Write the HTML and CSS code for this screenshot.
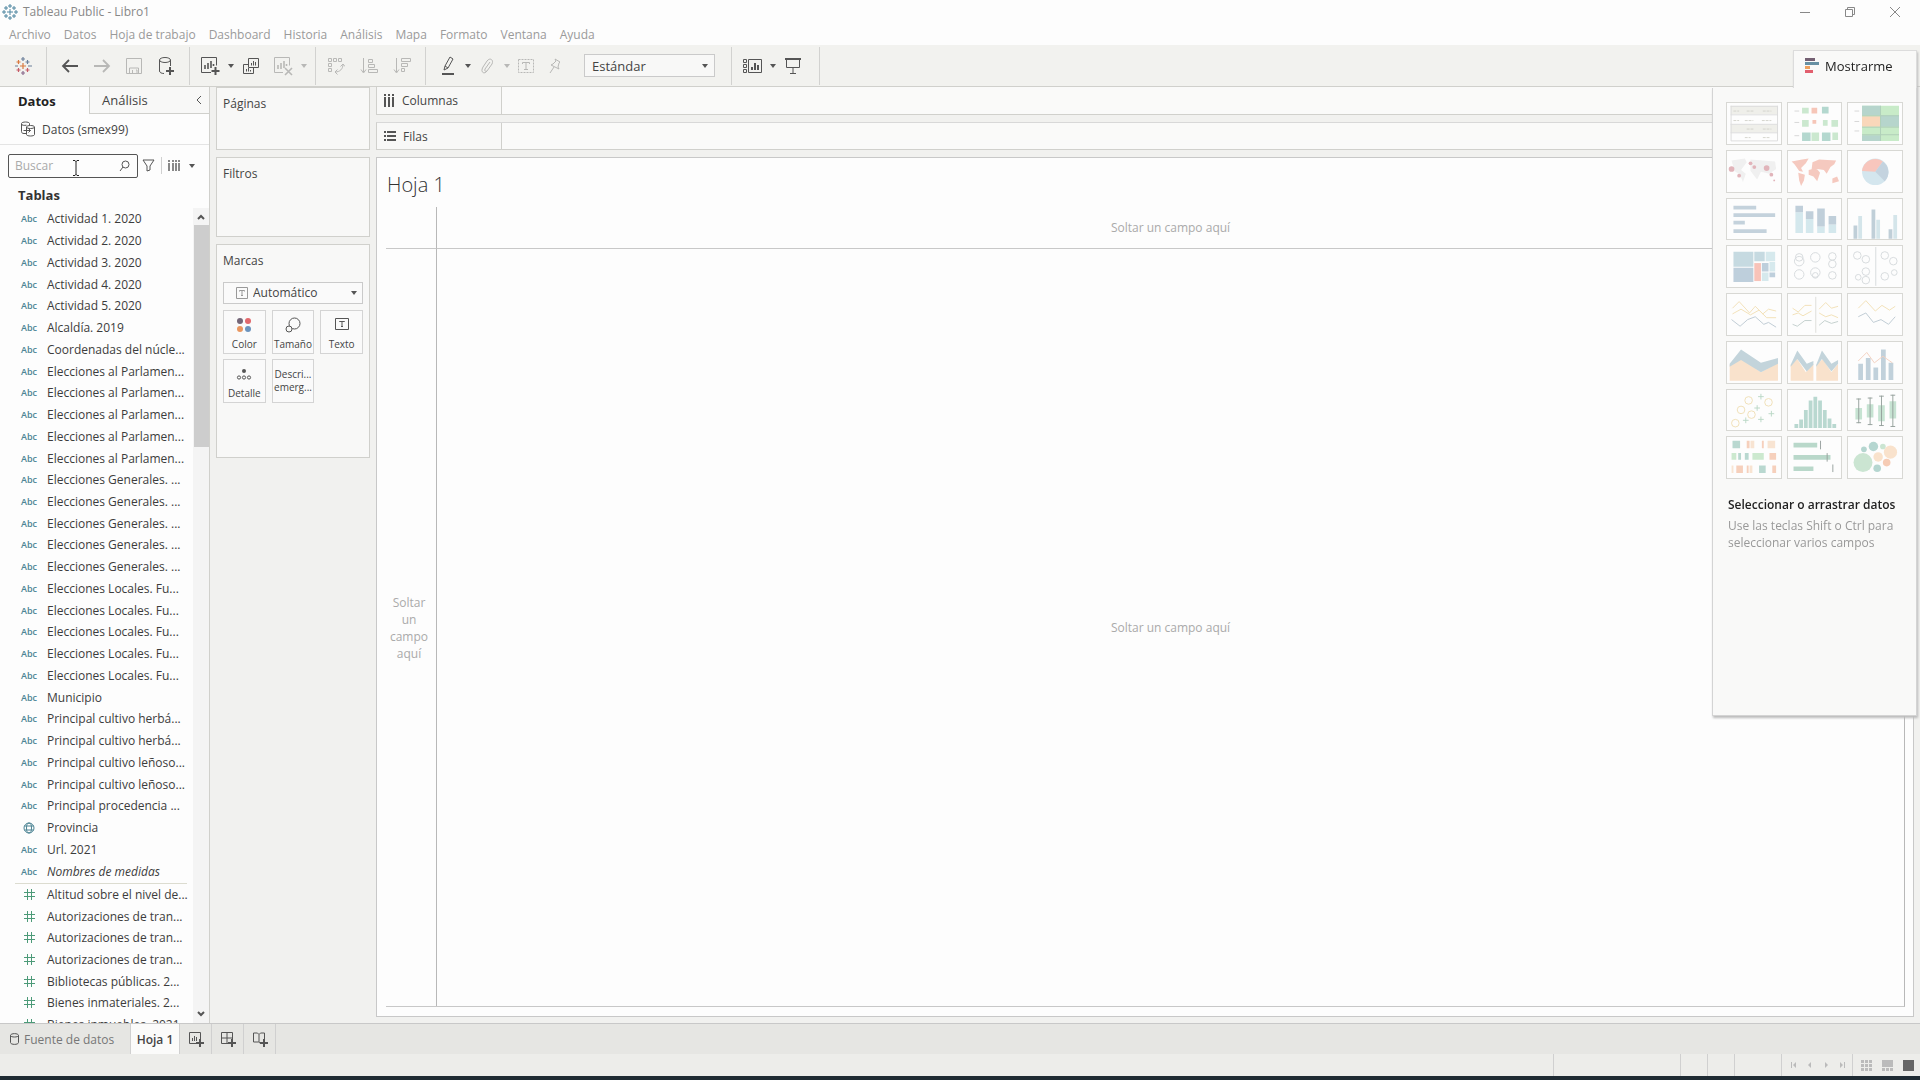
FILE: index.html
```
<!DOCTYPE html>
<html lang="es">

<head>
    <meta charset="UTF-8">
    <meta name="viewport" content="width=device-width, initial-scale=1.0">
    <title>Tableau Public - Libro1</title>
    <link rel="stylesheet" href="styles.css">
</head>

<body>
    <header class="title-bar">
        <svg class="app-icon" width="16" height="16" viewBox="0 0 16 16" fill="none" stroke="#4f86a0"><path d="M8 5v6M5 8h6M8 0v4M6 2h4M8 12v4M6 14h4M2 6v4M0 8h4M14 6v4M12 8h4M4 2v4M2 4h4M12 2v4M10 4h4M4 10v4M2 12h4M12 10v4M10 12h4"/></svg>
        <span class="app-title">Tableau Public - Libro1</span>
        <div class="window-buttons">
            <button aria-label="Minimizar"><svg width="12" height="12" viewBox="0 0 12 12"><path d="M1 6.500h10"/></svg></button>
            <button aria-label="Restaurar"><svg width="12" height="12" viewBox="0 0 12 12"><path d="M1.500 3.500h7v7h-7zM3.500 3.500v-2h7v7h-2"/></svg></button>
            <button aria-label="Cerrar"><svg width="12" height="12" viewBox="0 0 12 12"><path d="M1 1l10 10M11 1L1 11"/></svg></button>
        </div>
    </header>

    <nav class="menu-bar">
        <a href="#">Archivo</a>
        <a href="#">Datos</a>
        <a href="#">Hoja de trabajo</a>
        <a href="#">Dashboard</a>
        <a href="#">Historia</a>
        <a href="#">Análisis</a>
        <a href="#">Mapa</a>
        <a href="#">Formato</a>
        <a href="#">Ventana</a>
        <a href="#">Ayuda</a>
    </nav>

    <div class="toolbar">
        <div class="tool-group logo-group">
            <button aria-label="Inicio"><svg width="18" height="18" viewBox="0 0 18 18" fill="none" stroke-width="1.200"><path stroke="#d9793f" d="M9 6v6M6 9h6M4.500 3v4M2.500 5h4"/><path stroke="#c65b66" d="M4.500 11v4M2.500 13h4M13.500 11v4M11.500 13h4"/><path stroke="#6b7f9a" d="M9 0v4M7 2h4M13.500 3v4M11.500 5h4M1 9h3M14 9h4"/><path stroke="#8a6a8c" d="M9 14v4M7 16h4"/></svg></button>
        </div>
        <div class="tool-group">
            <button aria-label="Deshacer"><svg width="18" height="16" viewBox="0 0 18 16"><path stroke-width="1.800" d="M17 8H2M8 2L2 8l6 6"/></svg></button>
            <button aria-label="Rehacer" disabled><svg width="18" height="16" viewBox="0 0 18 16"><path stroke-width="1.800" d="M1 8h15M10 2l6 6-6 6"/></svg></button>
            <button aria-label="Guardar" disabled><svg width="18" height="18" viewBox="0 0 18 18"><path d="M1.500 1.500h15v15h-15zM4.500 16v-5h9v5M7.500 13v3M11 13h1v3"/></svg></button>
            <button aria-label="Nueva fuente de datos"><svg width="18" height="20" viewBox="0 0 18 20"><ellipse cx="8" cy="4" rx="5.500" ry="2.500"/><path d="M2.500 4v11c0 1.500 2 2.500 4.500 2.500M13.500 4v6"/><path stroke-width="2" d="M13 11v8M9 15h8"/></svg></button>
        </div>
        <div class="tool-group sheet-group">
            <button aria-label="Nueva hoja de trabajo"><svg width="20" height="20" viewBox="0 0 20 20"><path d="M11 16.500H1.500v-15h15v8"/><path stroke-width="1.600" d="M5 13V9M8 13V7M11 12V5M13.500 10V8"/><path stroke-width="2" d="M15.500 11v8M11.500 15h8"/></svg></button>
            <button class="caret" aria-label="Más hojas"></button>
            <button aria-label="Duplicar"><svg width="18" height="18" viewBox="0 0 18 18"><path d="M6.500 1.500h10v9h-10zM6 7.500H1.500v9h10V11M9.500 8.500V6M11.500 8.500V4M13.500 8.500V5M4.500 14.500V12M6.500 14.500V11M8.500 14.500V13"/></svg></button>
            <button aria-label="Borrar hoja" disabled><svg width="20" height="20" viewBox="0 0 20 20"><path d="M10 16.500H1.500v-15h15v8"/><path stroke-width="1.600" d="M5 13V9M8 13V7M11 12V5M13.500 10V8M12 12l7 7M19 12l-7 7"/></svg></button>
            <button class="caret" aria-label="Más opciones de borrado" disabled></button>
        </div>
        <div class="tool-group sort-group">
            <button aria-label="Intercambiar" disabled><svg width="18" height="18" viewBox="0 0 18 18"><path d="M1.500 1.500h3v3h-3zM6.500 1.500h3v3h-3zM11.500 1.500h3v3h-3zM1.500 6.500h3v3h-3zM1.500 11.500h3v3h-3zM16 7c0 5-3 8-8 8M13.500 9.500L16 7l2 2.500M10.500 12.500L8 15l2.500 2.500"/></svg></button>
            <button aria-label="Orden ascendente" disabled><svg width="18" height="18" viewBox="0 0 18 18"><path d="M3.500 1v14M1 12.500L3.500 16 6 12.500M8.500 2.500h4v3h-4zM8.500 7.500h6v3h-6zM8.500 12.500h9v3h-9z"/></svg></button>
            <button aria-label="Orden descendente" disabled><svg width="18" height="18" viewBox="0 0 18 18"><path d="M3.500 1v14M1 12.500L3.500 16 6 12.500M8.500 1.500h9v3h-9zM8.500 6.500h6v3h-6zM8.500 11.500h3v3h-3z"/></svg></button>
        </div>
        <div class="tool-group format-group">
            <button aria-label="Resaltar"><svg width="16" height="20" viewBox="0 0 16 20"><path d="M4 14l1-4 5-9 3 2-5 9zM5 10l3 2"/><path stroke-width="2" d="M2 18h12"/></svg></button>
            <button class="caret" aria-label="Opciones de resaltado"></button>
            <button aria-label="Agrupar" disabled><svg width="16" height="18" viewBox="0 0 16 18"><path d="M11 5l-5 7c-1 2 1 3 2 2l5-7c2-4-2-7-5-3L4 10c-3 5 1 8 4 4"/></svg></button>
            <button class="caret" aria-label="Opciones de grupo" disabled></button>
            <button aria-label="Etiquetas" disabled><svg width="18" height="18" viewBox="0 0 18 18"><path stroke-dasharray="2 1" d="M1.500 2.500h15v13h-15z"/><path d="M5.500 7V5.500h7V7M9 5.500v7M7 12.500h4"/></svg></button>
            <button aria-label="Fijar" disabled><svg width="14" height="18" viewBox="0 0 14 18"><path d="M7 2l5 3-1 1-1 4 1 2-8-4 2-1 3-3zM6 10l-4 6"/></svg></button>
        </div>
        <label class="fit-select">
            <select aria-label="Ajuste"><option>Estándar</option></select>
        </label>
        <div class="tool-group view-group">
            <button aria-label="Mostrar tarjetas"><svg width="20" height="18" viewBox="0 0 20 18"><path d="M1.500 2.500h3v3h-3zM1.500 7.500h3v3h-3zM1.500 12.500h3v3h-3zM6.500 2.500h13v13h-13z"/><path stroke-width="2" d="M10 13v-3M13 13V6M16 13V8"/></svg></button>
            <button class="caret" aria-label="Opciones de tarjetas"></button>
            <button aria-label="Modo presentación"><svg width="18" height="18" viewBox="0 0 18 18"><path d="M2.500 2v8.500h13V2M9 11v5M6 16.500h6"/><path stroke-width="2" d="M1 2h16"/></svg></button>
        </div>
    </div>

    <main class="workspace">
        <aside class="data-pane">
            <div class="pane-tabs">
                <button class="pane-tab active">Datos</button>
                <button class="pane-tab">Análisis<svg width="6" height="10" viewBox="0 0 6 10"><path d="M5 1L1 5l4 4"/></svg></button>
            </div>
            <div class="data-source">
                <svg width="16" height="16" viewBox="0 0 16 16"><path d="M6 12.500H4c-2 0-2.500-1-2.500-2v-8c0-2 8-2 8 0V4M1.500 3c0 1.500 3 1.500 5 1.200M6.500 6v7.500c0 2 8 2 8 0V6c0-2-8-2-8 0 0 2 8 2 8 0M3.500 9.500h7M8.500 7.500l2 2-2 2"/></svg>
                <span>Datos (smex99)</span>
            </div>
            <div class="search-row">
                <div class="search-box">
                    <input type="text" placeholder="Buscar" aria-label="Buscar">
                    <svg width="11" height="12" viewBox="0 0 11 12"><circle cx="6.500" cy="4.500" r="3.500"/><path d="M4 7L1 11"/></svg>
                    <svg class="text-cursor" width="8" height="18" viewBox="0 0 8 18"><path d="M1 1.500h2l1 1 1-1h2M4 2v14M1 16.500h2l1-1 1 1h2"/></svg>
                </div>
                <button class="filter-button" aria-label="Filtrar"><svg width="13" height="13" viewBox="0 0 13 13"><path d="M1 1h11L8 7v4l-3 1V7z"/></svg></button>
                <button class="view-button" aria-label="Ver datos"><svg width="12" height="11" viewBox="0 0 12 11"><path stroke-width="2" d="M1 0v2M1 3v8M5 0v2M5 3v8M8 0v2M8 3v8M11 0v2M11 3v8"/></svg></button>
                <button class="caret" aria-label="Opciones"></button>
            </div>
            <h2 class="tables-title">Tablas</h2>
            <div class="fields">
                <div class="field-lists">
                    <ul class="field-list dimensions">
                        <li><i>Abc</i>Actividad 1. 2020</li>
                        <li><i>Abc</i>Actividad 2. 2020</li>
                        <li><i>Abc</i>Actividad 3. 2020</li>
                        <li><i>Abc</i>Actividad 4. 2020</li>
                        <li><i>Abc</i>Actividad 5. 2020</li>
                        <li><i>Abc</i>Alcaldía. 2019</li>
                        <li><i>Abc</i>Coordenadas del núcle...</li>
                        <li><i>Abc</i>Elecciones al Parlamen...</li>
                        <li><i>Abc</i>Elecciones al Parlamen...</li>
                        <li><i>Abc</i>Elecciones al Parlamen...</li>
                        <li><i>Abc</i>Elecciones al Parlamen...</li>
                        <li><i>Abc</i>Elecciones al Parlamen...</li>
                        <li><i>Abc</i>Elecciones Generales. ...</li>
                        <li><i>Abc</i>Elecciones Generales. ...</li>
                        <li><i>Abc</i>Elecciones Generales. ...</li>
                        <li><i>Abc</i>Elecciones Generales. ...</li>
                        <li><i>Abc</i>Elecciones Generales. ...</li>
                        <li><i>Abc</i>Elecciones Locales. Fu...</li>
                        <li><i>Abc</i>Elecciones Locales. Fu...</li>
                        <li><i>Abc</i>Elecciones Locales. Fu...</li>
                        <li><i>Abc</i>Elecciones Locales. Fu...</li>
                        <li><i>Abc</i>Elecciones Locales. Fu...</li>
                        <li><i>Abc</i>Municipio</li>
                        <li><i>Abc</i>Principal cultivo herbá...</li>
                        <li><i>Abc</i>Principal cultivo herbá...</li>
                        <li><i>Abc</i>Principal cultivo leñoso...</li>
                        <li><i>Abc</i>Principal cultivo leñoso...</li>
                        <li><i>Abc</i>Principal procedencia ...</li>
                        <li><i><svg width="12" height="12" viewBox="0 0 12 12"><circle cx="6" cy="6" r="5"/><ellipse cx="6" cy="6" rx="2.500" ry="5"/><path d="M1.500 4h9M1.500 8h9"/></svg></i>Provincia</li>
                        <li><i>Abc</i>Url. 2021</li>
                        <li class="generated"><i>Abc</i>Nombres de medidas</li>
                    </ul>
                    <ul class="field-list measures">
                        <li><i><svg width="11" height="11" viewBox="0 0 11 11"><path d="M3.500 0v11M7.500 0v11M0 3.500h11M0 7.500h11"/></svg></i>Altitud sobre el nivel de...</li>
                        <li><i><svg width="11" height="11" viewBox="0 0 11 11"><path d="M3.500 0v11M7.500 0v11M0 3.500h11M0 7.500h11"/></svg></i>Autorizaciones de tran...</li>
                        <li><i><svg width="11" height="11" viewBox="0 0 11 11"><path d="M3.500 0v11M7.500 0v11M0 3.500h11M0 7.500h11"/></svg></i>Autorizaciones de tran...</li>
                        <li><i><svg width="11" height="11" viewBox="0 0 11 11"><path d="M3.500 0v11M7.500 0v11M0 3.500h11M0 7.500h11"/></svg></i>Autorizaciones de tran...</li>
                        <li><i><svg width="11" height="11" viewBox="0 0 11 11"><path d="M3.500 0v11M7.500 0v11M0 3.500h11M0 7.500h11"/></svg></i>Bibliotecas públicas. 2...</li>
                        <li><i><svg width="11" height="11" viewBox="0 0 11 11"><path d="M3.500 0v11M7.500 0v11M0 3.500h11M0 7.500h11"/></svg></i>Bienes inmateriales. 2...</li>
                        <li><i><svg width="11" height="11" viewBox="0 0 11 11"><path d="M3.500 0v11M7.500 0v11M0 3.500h11M0 7.500h11"/></svg></i>Bienes inmuebles. 2021</li>
                    </ul>
                </div>
                <div class="scrollbar">
                    <svg width="8" height="6" viewBox="0 0 8 6"><path stroke-width="2" d="M1 5l3-3 3 3"/></svg>
                    <div class="scroll-thumb"></div>
                    <svg width="8" height="6" viewBox="0 0 8 6"><path stroke-width="2" d="M1 1l3 3 3-3"/></svg>
                </div>
            </div>
        </aside>

        <section class="cards">
            <div class="card pages">Páginas</div>
            <div class="card filters">Filtros</div>
            <div class="card marks">
                <span>Marcas</span>
                <label class="mark-type">
                    <svg width="12" height="12" viewBox="0 0 12 12"><path d="M.5.5h11v11H.5zM3.500 4.500v-1h5v1M6 3.500v5M5 8.500h2"/></svg>
                    <select aria-label="Tipo de marca"><option>Automático</option></select>
                </label>
                <div class="mark-buttons">
                    <button><svg width="16" height="16" viewBox="0 0 16 16" stroke="none"><circle cx="4" cy="4" r="3" fill="#746678"/><circle cx="12" cy="4" r="3" fill="#e2686c"/><circle cx="4" cy="12" r="3" fill="#e9965f"/><circle cx="12" cy="12" r="3" fill="#6b93bd"/></svg>Color</button>
                    <button><svg width="16" height="16" viewBox="0 0 16 16"><circle cx="9.500" cy="6.500" r="5.500"/><circle cx="4" cy="12" r="3" fill="#f8f8f7"/></svg>Tamaño</button>
                    <button><svg width="14" height="14" viewBox="0 0 14 14"><path d="M.5 1.500h13v11H.5zM4.500 5V4.500h5V5M7 4.500v5M6 9.500h2"/></svg>Texto</button>
                    <button><svg width="16" height="16" viewBox="0 0 16 16"><circle cx="8" cy="5" r="2" fill="#555" stroke="none"/><circle cx="3" cy="11.500" r="1.600"/><circle cx="8" cy="11.500" r="1.600"/><circle cx="13" cy="11.500" r="1.600"/></svg>Detalle</button>
                    <button class="tooltip-button">Descri...<br>emerg...</button>
                </div>
            </div>
        </section>

        <section class="view">
            <div class="shelf">
                <div class="shelf-name"><svg width="11" height="13" viewBox="0 0 11 13"><path stroke-width="2" d="M1 0v2M1 3v10M5 0v2M5 3v10M9 0v2M9 3v10"/></svg>Columnas</div>
            </div>
            <div class="shelf">
                <div class="shelf-name"><svg width="12" height="11" viewBox="0 0 12 11"><path stroke-width="2" d="M0 1h2M3 1h9M0 5h2M3 5h9M0 9h2M3 9h9"/></svg>Filas</div>
            </div>
            <div class="sheet">
                <h1>Hoja 1</h1>
                <div class="canvas">
                    <div class="corner"></div>
                    <div class="drop-zone drop-columns">Soltar un campo aquí</div>
                    <div class="drop-zone drop-rows">Soltar un campo aquí</div>
                    <div class="drop-zone drop-body">Soltar un campo aquí</div>
                </div>
            </div>
        </section>
    </main>

    <footer>
        <div class="sheet-tabs">
            <button class="sheet-tab source"><svg width="9" height="12" viewBox="0 0 9 12"><path d="M.5 2.500v7c0 2.500 8 2.500 8 0v-7c0-2.500-8-2.500-8 0 0 2 8 2 8 0"/></svg>Fuente de datos</button>
            <button class="sheet-tab active">Hoja 1</button>
            <button class="sheet-tab add" aria-label="Nueva hoja"><svg width="16" height="16" viewBox="0 0 16 16"><path d="M9 12.500H1.500v-11h11V8M4.500 10V7M6.500 10V5M8.500 10V6"/><path stroke-width="2" d="M12 8v8M8 12h8"/></svg></button>
            <button class="sheet-tab add" aria-label="Nuevo dashboard"><svg width="16" height="16" viewBox="0 0 16 16"><path d="M9 12.500H1.500v-11h11V8M1.500 7h11M7 1.500v11"/><path stroke-width="2" d="M12 8v8M8 12h8"/></svg></button>
            <button class="sheet-tab add" aria-label="Nueva historia"><svg width="16" height="16" viewBox="0 0 16 16"><path d="M8 12L6.500 11H1.500v-9h4L7 3.500 8.500 2h4v6M7 3.500V11"/><path stroke-width="2" d="M12 8v8M8 12h8"/></svg></button>
        </div>
        <div class="status-bar">
            <span class="status-cell wide"></span>
            <span class="status-cell"></span>
            <span class="status-cell"></span>
            <span class="status-cell last"></span>
            <div class="pager">
                <button aria-label="Primera"><svg width="8" height="8" viewBox="0 0 8 8"><path d="M1 1h1v6H1zM6 1v6L3 4z"/></svg></button>
                <button aria-label="Anterior"><svg width="8" height="8" viewBox="0 0 8 8"><path d="M5 1v6L2 4z"/></svg></button>
                <button aria-label="Siguiente"><svg width="8" height="8" viewBox="0 0 8 8"><path d="M3 1v6l3-3z"/></svg></button>
                <button aria-label="Última"><svg width="8" height="8" viewBox="0 0 8 8"><path d="M6 1h1v6H6zM2 1v6l3-3z"/></svg></button>
            </div>
            <div class="view-modes">
                <button aria-label="Clasificador"><svg width="11" height="11" viewBox="0 0 11 11"><path d="M0 0h3v3H0zM4 0h3v3H4zM8 0h3v3H8zM0 4h3v3H0zM4 4h3v3H4zM8 4h3v3H8zM0 8h3v3H0zM4 8h3v3H4zM8 8h3v3H8z"/></svg></button>
                <button aria-label="Tira de miniaturas"><svg width="11" height="11" viewBox="0 0 11 11"><path d="M0 0h11v7H0zM0 8h3v3H0zM4 8h3v3H4zM8 8h3v3H8z"/></svg></button>
                <button class="active" aria-label="Pestañas"><svg width="11" height="11" viewBox="0 0 11 11"><path d="M0 0h11v11H0z"/></svg></button>
            </div>
        </div>
        <div class="taskbar-edge"></div>
    </footer>

    <div class="show-me">
        <button class="show-me-tab"><svg width="15" height="16" viewBox="0 0 15 16" stroke="none"><path fill="#746073" d="M1 0h10v3H1z"/><path fill="#6790a3" d="M1 4h14v3H1z"/><path fill="#eda05d" d="M1 8h5v3H1z"/><path fill="#e25f6e" d="M1 12h8v3H1z"/></svg>Mostrarme</button>
        <div class="show-me-body">
            <div class="chart-grid">
                <button disabled aria-label="Tabla de texto"><svg viewBox="0 0 55 43"><path fill="#ecece6" d="M3 3h50v9H3zM3 23h50v8H3z"/><path stroke="#d4d4d4" d="M3.500 3v37h49V3M3 3.500h50M3 12.500h50M3 22.500h50M3 31.500h50"/><path stroke="#c9c9c0" stroke-dasharray="3 1" d="M6 8.500h6M20 8.500h8M37 8.500h9M6 18.500h6M18 18.500h9M36 18.500h10M20 27.500h8M37 27.500h9M18 36.500h6M37 36.500h8"/></svg></button>
                <button disabled aria-label="Mapa de calor"><svg viewBox="0 0 55 43"><path fill="#bfe3c4" d="M14 5h7v6h-7zM14 18h7v7h-7zM36 18h5v6h-5zM45 18h7v7h-7zM24 31h8v9h-8zM46 31h6v8h-6z"/><path fill="#f5b9a8" d="M24 5h6v6h-6zM25 18h4v4h-4z"/><path fill="#a3cfc4" d="M35 4h7v7h-7zM14 31h9v9h-9zM35 31h9v9h-9z"/><path stroke="#ccc" d="M6 8.500h5M6 20.500h5M6 34.500h5"/></svg></button>
                <button disabled aria-label="Tabla resaltada"><svg viewBox="0 0 55 43"><path fill="#bce7bb" d="M14 3h39v37H14z"/><path fill="#a5ccc0" d="M14 3h20v10H14zM34 13h19v12H34zM14 34h20v6H14z"/><path fill="#f9ceaa" d="M14 14h19v11H14z"/><path stroke="#9dc4a8" d="M14 13.500h39M14 25.500h39M14 33.500h39M33.500 3v37"/><path stroke="#ccc" d="M6 8.500h5M6 19.500h5M6 29.500h5"/></svg></button>
                <button disabled aria-label="Mapa de símbolos"><svg viewBox="0 0 55 43"><path fill="#ededed" d="M4 10l14-2 2 4-6 8 5 4-3 9-3-8-6-4zM24 9l26 2 1 8-7 5-9-2-4 8-7-9z"/><g fill="#dba3aa"><circle cx="4" cy="19" r="3"/><circle cx="41" cy="18" r="3"/><circle cx="28" cy="17" r="2"/><circle cx="46" cy="25" r="2"/><circle cx="12" cy="26" r="2"/><circle cx="24" cy="13" r="2"/><circle cx="49" cy="31" r="1"/></g></svg></button>
                <button disabled aria-label="Mapa"><svg viewBox="0 0 55 43"><path fill="#f4bdb0" d="M3 11l11-2 7-1-3 5-5 5 2 4-4-1-5-7zM10 23l7 2-1 6-3 6-2-6zM21 20l8-2 4 5-3 9-4-5-5-2zM25 12l7-3 18 1-2 4-4 3-4 7-3-4-7-1-6 1zM46 29l5-2 2 5-7 2z"/></svg></button>
                <button disabled aria-label="Gráfico circular"><svg viewBox="0 0 55 43"><circle cx="28" cy="22" r="14" fill="#cae1eb"/><path fill="#f7b9ae" d="M28 22L14 21a14 14 0 0 1 22-10z"/><path fill="#b6c9d8" d="M28 22l8-11a14 14 0 0 1 2 21z"/></svg></button>
                <button disabled aria-label="Barras horizontales"><svg viewBox="0 0 55 43"><path fill="#b7c8d4" d="M6 7h24v4H6zM6 15h44v4H6zM6 23h12v4H6zM6 32h35v4H6z"/></svg></button>
                <button disabled aria-label="Barras apiladas"><svg viewBox="0 0 55 43"><path fill="#cbe3ea" d="M7 14h8v22H7zM18 21h8v15h-8zM30 29h8v7h-8zM42 27h8v9h-8z"/><path fill="#b2c4d2" d="M7 7h8v7H7zM18 13h8v8h-8zM30 10h8v19h-8zM42 18h8v9h-8z"/></svg></button>
                <button disabled aria-label="Barras paralelas"><svg viewBox="0 0 55 43"><path fill="#b2c4d0" d="M5 28h4v14H5zM24 11h4v31h-4zM42 32h4v10h-4z"/><path fill="#cbe0e6" d="M10 18h4v24h-4zM29 22h4v20h-4zM47 17h4v25h-4z"/></svg></button>
                <button disabled aria-label="Diagrama de árbol"><svg viewBox="0 0 55 43"><path fill="#b9d2db" d="M6 6h21v16H6zM28 6h11v10H28z"/><path fill="#afc4d5" d="M6 23h21v15H6zM36 18h7v9h-7zM44 28h6v5h-6z"/><path fill="#cde5ea" d="M40 6h10v10H40zM44 17h6v10h-6zM36 28h7v9h-7z"/><path fill="#f7b5a9" d="M28 18h7v19h-7z"/></svg></button>
                <button disabled aria-label="Círculos"><svg viewBox="0 0 55 43" stroke="#ccd1d5"><circle cx="11" cy="16" r="5"/><circle cx="11" cy="12" r="4"/><circle cx="28" cy="12" r="5"/><circle cx="46" cy="11" r="4"/><circle cx="11" cy="30" r="5"/><circle cx="28" cy="28" r="5"/><circle cx="28" cy="31" r="3"/><circle cx="46" cy="19" r="4"/><circle cx="46" cy="31" r="4"/></svg></button>
                <button disabled aria-label="Círculos en paralelo"><svg viewBox="0 0 55 43" stroke="#ccd1d5"><path d="M28.500 1v41"/><circle cx="9" cy="10" r="4"/><circle cx="18" cy="14" r="4"/><circle cx="18" cy="27" r="4"/><circle cx="18" cy="36" r="4"/><circle cx="38" cy="10" r="4"/><circle cx="47" cy="16" r="4"/><circle cx="38" cy="32" r="4"/><circle cx="10" cy="33" r="3"/><circle cx="48" cy="28" r="3"/></svg></button>
                <button disabled aria-label="Líneas continuas"><svg viewBox="0 0 55 43"><path stroke="#efd9a4" d="M5 15l7-7 11 12 6-7 8 8 6-5 8 2M5 21l9-5 10 6 9-5 8 8h10"/><path stroke="#aebdc8" d="M4 27l9 7 8-7 8-3 9 8 5-2 8 5"/></svg></button>
                <button disabled aria-label="Líneas discretas"><svg viewBox="0 0 55 43"><path stroke="#d7d7d0" d="M28.500 3v38"/><path stroke="#efd9a4" d="M4 15l6 4 7-7h7M4 22l6-2 5 3 9-5M32 16l7-7 6 6 7-2M32 20l7 4 6-2 7 3"/><path stroke="#b4c4c1" d="M4 32l5 2 8-6h7M32 33l6-5 7 3 7-2"/></svg></button>
                <button disabled aria-label="Líneas dobles"><svg viewBox="0 0 55 43"><path stroke="#efd9a4" d="M10 15l8-8 10 11 7-6 8 5 6-4"/><path stroke="#aebdc8" d="M10 24l8-4 8 10 8-3 8 5 7-8"/></svg></button>
                <button disabled aria-label="Área continua"><svg viewBox="0 0 55 43"><path fill="#f9dcc0" d="M2 24l12-7 21 15 18-10v19H2z"/><path fill="#b5cbd3" d="M2 23L14 8l21 14 18-5v6L35 32 14 19 2 26z"/></svg></button>
                <button disabled aria-label="Área discreta"><svg viewBox="0 0 55 43"><path fill="#f9dcc0" d="M2 24l7-6 9 14 8-9v18H2zM29 24l7-6 9 14 7-9v18H29z"/><path fill="#b5cbd3" d="M2 24L9 9l10 14 7-3v4l-7 7L9 18l-7 8zM29 24l6-15 10 14 7-4v4l-7 8-10-13-6 8z"/></svg></button>
                <button disabled aria-label="Combinación doble"><svg viewBox="0 0 55 43"><path fill="#b3c7d3" d="M10 23h5v17h-5zM18 17h5v23h-5zM26 27h5v13h-5zM34 8h5v32h-5zM42 22h5v18h-5z"/><path stroke="#f1c5b0" d="M10 20l9-9 8 11 9-7 10 7"/></svg></button>
                <button disabled aria-label="Dispersión"><svg viewBox="0 0 55 43"><g stroke="#ecd8a4"><circle cx="22" cy="11" r="4"/><circle cx="43" cy="13" r="4"/><circle cx="14" cy="21" r="4"/><circle cx="25" cy="26" r="4"/><circle cx="8" cy="35" r="4"/></g><path stroke="#a9ceb8" d="M35 4v6M32 7h6M31 16v6M28 19h6M46 22v6M43 25h6M35 28v6M32 31h6M19 29v6M16 32h6"/></svg></button>
                <button disabled aria-label="Histograma"><svg viewBox="0 0 55 43"><path fill="#a9d0c6" d="M6 36h4v4H6zM11 31h4v9h-4zM16 21h4v19h-4zM21 11h4v29h-4zM26 7h4v33h-4zM31 11h4v29h-4zM36 21h4v19h-4zM41 30h4v10h-4zM46 36h4v4h-4z"/></svg></button>
                <button disabled aria-label="Diagrama de caja"><svg viewBox="0 0 55 43"><path fill="#b9ddc8" d="M7 19h7v12H7zM19 15h7v14h-7zM31 16h7v17h-7zM43 12h7v18h-7z"/><path stroke="#7c8a84" d="M10.500 9v26M22.500 8v29M34.500 6v32M46.500 5v34M8 9.500h5M8 34.500h5M20 8.500h5M20 36.500h5M32 6.500h5M32 37.500h5M44 5.500h5M44 38.500h5"/></svg></button>
                <button disabled aria-label="Gantt"><svg viewBox="0 0 55 43"><path fill="#a9d0c6" d="M5 4h8v8H5zM11 17h3v7h-3zM18 17h4v7h-4zM33 30h7v8h-7z"/><path fill="#c1e5c4" d="M4 17h5v7H4zM26 17h12v7H26z"/><path fill="#f5c5ad" d="M20 4h3v8h-3zM44 17h7v7h-7zM9 30h7v8H9zM36 4h2v8h-2zM20 30h2v8h-2zM47 30h4v8h-4z"/><path fill="#f8dfc8" d="M24 4h4v8h-4zM42 4h8v8h-8zM4 30h2v8H4zM23 30h3v8h-3z"/></svg></button>
                <button disabled aria-label="Gráfico de bala"><svg viewBox="0 0 55 43"><path fill="#a9d0be" d="M5 6h25v5H5zM5 19h39v5H5zM5 31h21v5H5z"/><path stroke="#7f8b86" d="M33.500 4v9M40.500 17v9M46.500 29v8"/></svg></button>
                <button disabled aria-label="Burbujas"><svg viewBox="0 0 55 43"><g fill="#bfe0c8"><circle cx="15" cy="27" r="10"/><circle cx="36" cy="10" r="3"/></g><g fill="#a4cdc6"><circle cx="26" cy="10" r="5"/><circle cx="16" cy="13" r="3"/><circle cx="30" cy="33" r="4"/></g><g fill="#f9dcc0"><circle cx="44" cy="16" r="7"/><circle cx="31" cy="21" r="5"/></g><circle cx="40" cy="27" r="4" fill="#f5c0a4"/></svg></button>
            </div>
            <h3>Seleccionar o arrastrar datos</h3>
            <p>Use las teclas Shift o Ctrl para seleccionar varios campos</p>
        </div>
    </div>
</body>

</html>
```

FILE: styles.css
```
* {
    box-sizing: border-box;
}

body {
    margin: 0;
    height: 100vh;
    display: flex;
    flex-direction: column;
    overflow: hidden;
    position: relative;
    font-family: "Open Sans", "Noto Sans", sans-serif;
    font-size: 12px;
    color: #444;
    background-color: #fdfdfd;
}

button, input, select {
    font: inherit;
    color: inherit;
    background: none;
    border: none;
    margin: 0;
    padding: 0;
}

svg {
    display: block;
    flex: none;
    fill: none;
    stroke: #555;
}

svg[stroke="none"] {
    stroke: none;
}

h1, h2, h3, p, ul {
    margin: 0;
    padding: 0;
}

/* Title and menu */
.title-bar {
    height: 23px;
    display: flex;
    align-items: center;
    padding-left: 2px;
    color: #888;
}

.title-bar .app-icon {
    stroke: #4f86a0;
}

.app-title {
    margin-left: 5px;
}

.window-buttons {
    margin-left: auto;
    margin-right: 3px;
    display: flex;
}

.window-buttons button {
    width: 45px;
    height: 22px;
    display: flex;
    align-items: center;
    justify-content: center;
}

.window-buttons svg {
    stroke: #888;
}

.menu-bar {
    height: 22px;
    display: flex;
    align-items: center;
    gap: 13px;
    padding-left: 9px;
}

.menu-bar a {
    color: #9a9a9a;
    text-decoration: none;
}

/* Toolbar */
.toolbar {
    height: 42px;
    display: flex;
    align-items: center;
    background-color: #f2f2ef;
    border-bottom: 1px solid #d0d0cc;
}

.tool-group {
    height: 38px;
    display: flex;
    align-items: center;
    padding: 0 7px;
    border-right: 1px solid #d2d2d0;
}

.tool-group button {
    width: 32px;
    height: 32px;
    display: flex;
    align-items: center;
    justify-content: center;
}

.tool-group button:disabled svg {
    stroke: #b8b8b6;
}

.tool-group .caret {
    width: 9px;
}

.caret::before,
.fit-select::after,
.mark-type::after {
    content: '';
    border: 3px solid transparent;
    border-top: 4px solid #555;
    border-bottom: none;
}

.caret:disabled::before {
    border-top-color: #b8b8b6;
}

.logo-group svg {
    stroke: none;
}

.sheet-group {
    padding-left: 4px;
}

.sort-group {
    padding-left: 4px;
    gap: 1px;
}

.format-group {
    padding: 0 15px 0 8px;
    gap: 1px;
    border-right: none;
}

.format-group button {
    width: 28px;
}

.view-group {
    padding: 0 10px 0 4px;
    border-left: 1px solid #d2d2d0;
}

.fit-select {
    position: relative;
    width: 131px;
    height: 23px;
    margin-right: 16px;
    border: 1px solid #cacaca;
    background-color: #f8f8f7;
}

.fit-select select {
    appearance: none;
    width: 100%;
    height: 100%;
    padding-left: 7px;
    font-size: 13px;
}

.fit-select::after {
    position: absolute;
    right: 6px;
    top: 9px;
}

/* Workspace */
.workspace {
    flex: 1;
    min-height: 0;
    display: flex;
    background-color: #f1f1ef;
}

.data-pane {
    width: 210px;
    display: flex;
    flex-direction: column;
    background-color: #fdfdfd;
    border-right: 1px solid #d0d0cc;
}

.pane-tabs {
    height: 27px;
    flex: none;
    display: flex;
}

.pane-tab {
    flex: 1;
    display: flex;
    align-items: center;
    justify-content: space-between;
    padding: 0 7px 0 12px;
    font-size: 13px;
    background-color: #f8f8f7;
    border-left: 1px solid #d0d0cc;
    border-bottom: 1px solid #d0d0cc;
}

.pane-tab.active {
    flex: none;
    width: 89px;
    padding-left: 18px;
    font-weight: bold;
    color: #222;
    background: none;
    border: none;
}

.data-source {
    height: 31px;
    flex: none;
    display: flex;
    align-items: center;
    gap: 6px;
    padding-left: 20px;
    border-bottom: 1px solid #e4e4e4;
}

.search-row {
    flex: none;
    display: flex;
    align-items: center;
    height: 41px;
    padding-left: 8px;
}

.search-box {
    position: relative;
    display: flex;
    align-items: center;
    width: 130px;
    height: 24px;
    border: 1px solid #555;
    border-radius: 2px;
    padding: 0 7px 0 6px;
}

.search-box input {
    flex: 1;
    min-width: 0;
    outline: none;
}

.search-box input::placeholder {
    color: #aaa;
}

.text-cursor {
    position: absolute;
    left: 63px;
    top: 4px;
    stroke: #222;
}

.filter-button {
    padding: 0 6px 0 4px;
}

.view-button {
    padding: 3px 8px 3px 6px;
    border-left: 1px solid #d0d0d0;
}

.view-button svg {
    stroke: #888;
}

.search-row .caret {
    margin-left: 1px;
    display: flex;
}

.tables-title {
    flex: none;
    height: 22px;
    padding-left: 18px;
    font-size: 13px;
    line-height: 18px;
    color: #333;
}

.fields {
    flex: 1;
    min-height: 0;
    display: flex;
}

.field-lists {
    flex: 1;
    min-width: 0;
    overflow: hidden;
}

.field-list {
    list-style: none;
    display: grid;
    grid-auto-rows: 1fr;
}

.dimensions {
    height: 674px;
}

.measures {
    height: 152px;
    margin: 1px 6px 0 15px;
    border-top: 1px solid #dcdcd0;
}

.field-list li {
    display: flex;
    align-items: center;
    white-space: nowrap;
    color: #3c3c3c;
}

.field-list i {
    width: 26px;
    margin-left: 21px;
    flex: none;
    font-size: 9px;
    font-style: normal;
    font-weight: 600;
    color: #4c8494;
}

.field-list svg {
    margin-left: 2px;
    stroke: #4c8494;
}

.measures i {
    margin-left: 6px;
}

.measures svg {
    margin-left: 3px;
    stroke: #4c9a78;
}

.field-list .generated {
    font-style: italic;
}

.scrollbar {
    width: 16px;
    flex: none;
    display: flex;
    flex-direction: column;
    align-items: center;
    padding: 6px 0;
    background-color: #f4f4f4;
}

.scroll-thumb {
    width: 15px;
    height: 222px;
    margin: 5px 0 auto;
    background-color: #cdcdcd;
}

/* Cards */
.cards {
    width: 154px;
    margin: 0 6px;
    display: flex;
    flex-direction: column;
    gap: 7px;
}

.card {
    padding: 7px 6px;
    background-color: #f8f8f7;
    border: 1px solid #d0d0cc;
    line-height: 18px;
}

.pages {
    height: 63px;
}

.filters {
    height: 80px;
}

.marks {
    height: 214px;
}

.mark-type {
    position: relative;
    display: flex;
    align-items: center;
    height: 22px;
    margin-top: 12px;
    padding-left: 12px;
    border: 1px solid #cacaca;
    background-color: #fafafa;
}

.mark-type svg {
    stroke: #999;
}

.mark-type select {
    appearance: none;
    flex: 1;
    padding-left: 5px;
}

.mark-type::after {
    position: absolute;
    right: 5px;
    top: 8px;
}

.mark-buttons {
    display: grid;
    grid-template-columns: repeat(3, 1fr);
    gap: 5px 6px;
    margin-top: 6px;
}

.mark-buttons button {
    height: 44px;
    display: flex;
    flex-direction: column;
    align-items: center;
    justify-content: space-between;
    padding: 6px 0 2px;
    border: 1px solid #d4d4d4;
    background-color: #fafafa;
    font-size: 10px;
    line-height: 14px;
}

.mark-buttons .tooltip-button {
    display: block;
    line-height: 13px;
    padding: 0;
}

/* View */
.view {
    flex: 1;
    min-width: 0;
    display: flex;
    flex-direction: column;
    padding: 0 6px 6px 0;
}

.shelf {
    height: 28px;
    flex: none;
    margin-bottom: 7px;
    border: 1px solid #d0d0cc;
    border-top-color: #d8d8d8;
    background-color: #fafaf9;
}

.shelf:first-child {
    border-top: none;
}

.shelf-name {
    width: 125px;
    height: 100%;
    display: flex;
    align-items: center;
    gap: 7px;
    padding-left: 7px;
    border-right: 1px solid #d0d0cc;
    background-color: #f8f8f7;
}

.sheet {
    flex: 1;
    min-height: 0;
    display: flex;
    flex-direction: column;
    padding: 11px 8px 9px 9px;
    border: 1px solid #c8c8c8;
    background-color: #fdfdfd;
}

.sheet h1 {
    padding-left: 1px;
    font-size: 20px;
    line-height: 32px;
    font-weight: 300;
    margin-bottom: 6px;
    color: #333;
}

.canvas {
    flex: 1;
    display: grid;
    grid-template-columns: 51px 1fr;
    grid-template-rows: 42px 1fr;
    border-right: 1px solid #b8b8b8;
    border-bottom: 1px solid #c8c8c8;
}

.drop-zone {
    display: flex;
    align-items: center;
    justify-content: center;
    text-align: center;
    line-height: 17px;
    color: #aaa;
}

.corner, .drop-rows {
    border-right: 1px solid #b8b8b8;
}

.corner, .drop-columns {
    border-bottom: 1px solid #c8c8c8;
}

.drop-rows {
    padding: 0 6px 0 2px;
}

/* Bottom bars */
.sheet-tabs {
    height: 31px;
    display: flex;
    border-top: 1px solid #c8c8c8;
    background-color: #e6e6e3;
}

.sheet-tab {
    display: flex;
    align-items: center;
    justify-content: center;
    border-right: 1px solid #d0d0d0;
}

.sheet-tab.source {
    width: 131px;
    justify-content: flex-start;
    gap: 5px;
    padding-left: 10px;
    color: #777;
}

.sheet-tab.active {
    width: 49px;
    background-color: #fbfbfa;
    font-weight: 600;
}

.sheet-tab.add {
    width: 32px;
}

.status-bar {
    height: 22px;
    display: flex;
    justify-content: flex-end;
    background-color: #ededea;
}

.status-cell {
    width: 27px;
    border-left: 1px solid #d0d0d0;
}

.status-cell.wide {
    width: 127px;
}

.status-cell.last {
    width: 47px;
}

.pager, .view-modes {
    display: flex;
    align-items: center;
    border-left: 1px solid #d0d0d0;
}

.pager {
    width: 71px;
    padding-left: 8px;
    gap: 8px;
}

.view-modes {
    width: 68px;
    padding-left: 8px;
    gap: 10px;
}

.status-bar svg {
    stroke: none;
    fill: #bbb;
}

.status-bar .active svg {
    fill: #666;
}

.taskbar-edge {
    height: 4px;
    background-color: #1f2b33;
}

/* Show Me panel floats above the view */
.show-me {
    position: absolute;
    top: 50px;
    right: 3px;
    width: 205px;
    display: flex;
    flex-direction: column;
    filter: drop-shadow(1px 2px 1px #bbb);
}

.show-me-tab {
    align-self: flex-end;
    width: 124px;
    height: 38px;
    display: flex;
    align-items: center;
    gap: 6px;
    padding: 0 0 8px 10px;
    font-size: 13px;
    color: #222;
    background-color: #f9f9f8;
    border: 1px solid #dcdcdc;
    border-bottom: none;
}

.show-me-body {
    height: 628px;
    padding: 14px 13px;
    background-color: #f9f9f8;
    border: 1px solid #d4d4d4;
    border-top: none;
}

.chart-grid {
    display: grid;
    grid-template-columns: repeat(3, 1fr);
    grid-auto-rows: 1fr;
    gap: 5px;
    height: 377px;
}

.chart-grid button {
    min-height: 0;
    background-color: #fdfdfd;
    border: 1px solid #d8d8d4;
}

.chart-grid svg {
    width: 100%;
    height: 100%;
    stroke: none;
    opacity: 0.8;
}

.chart-grid svg[stroke] {
    stroke: #ccd1d5;
}

.show-me h3 {
    margin: 17px 0 3px 2px;
    font-size: 12px;
    font-weight: 600;
    line-height: 18px;
    color: #222;
    white-space: nowrap;
}

.show-me p {
    padding-left: 2px;
    line-height: 17px;
    color: #999;
}
```
